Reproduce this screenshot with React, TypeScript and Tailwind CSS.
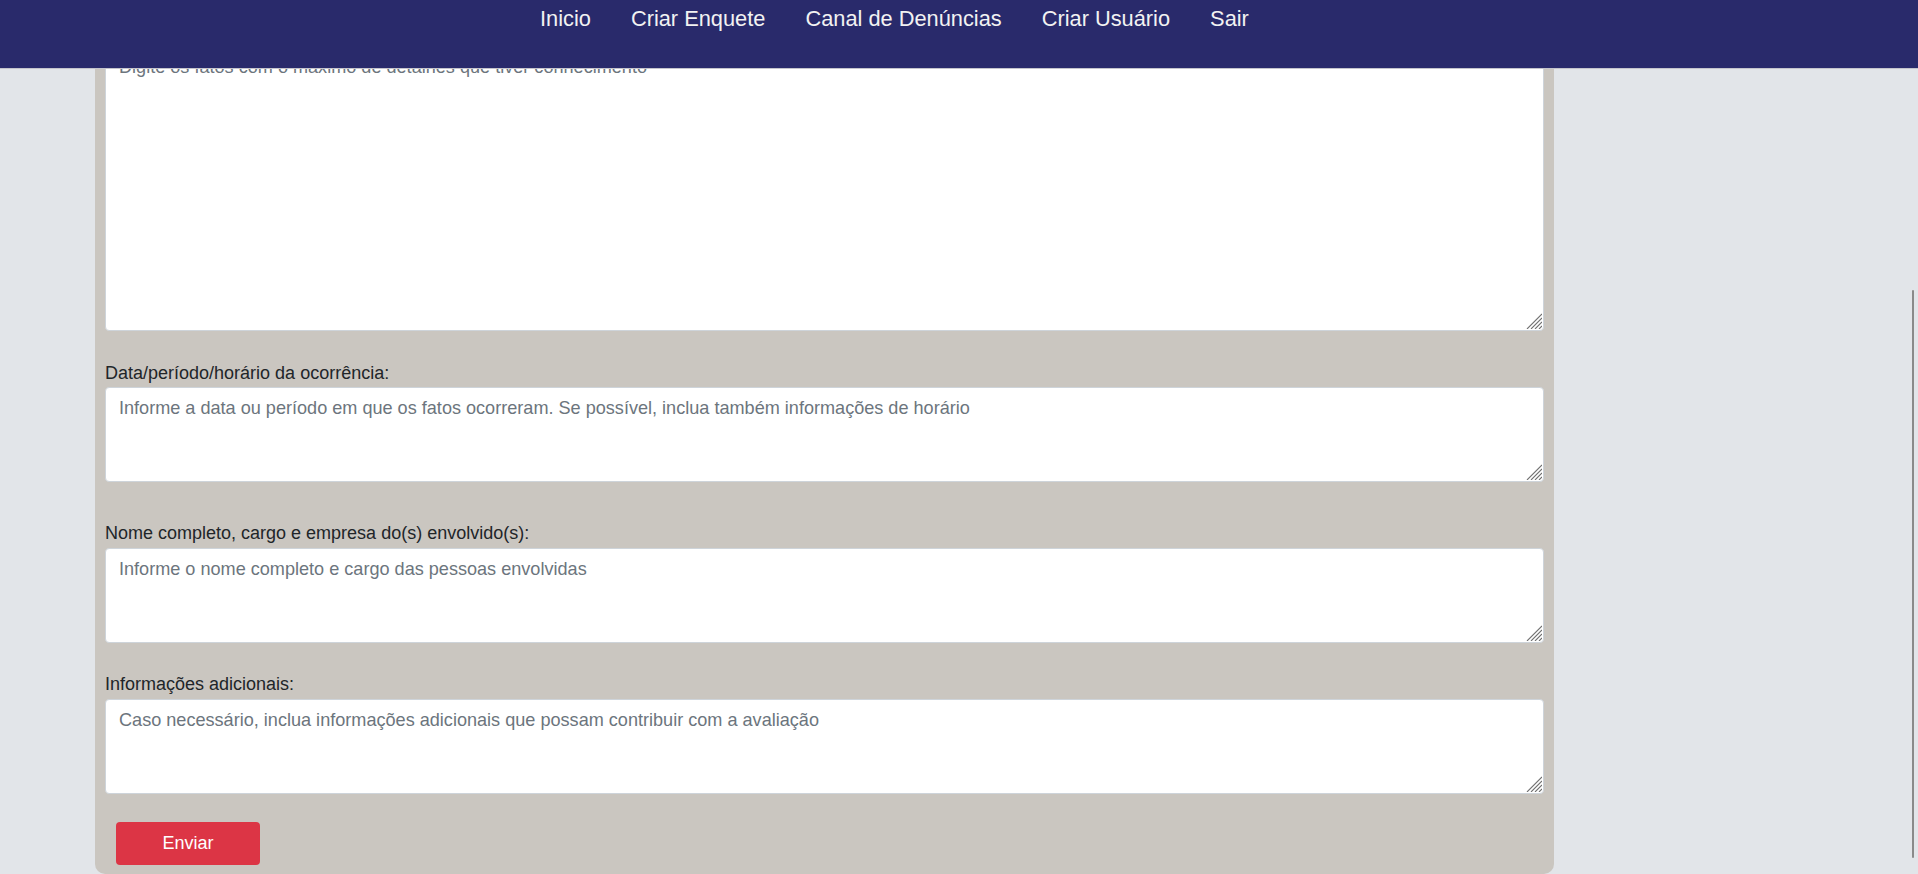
import React from 'react';

const links = ['Inicio', 'Criar Enquete', 'Canal de Denúncias', 'Criar Usuário', 'Sair'];

type FieldProps = {
  label?: string; // label shown above the textarea
  placeholder: string;
  height: string; // tailwind height class
  labelClass?: string; // spacing under the label
};

const fieldClass =
  'block w-full resize-none rounded-[4px] border border-[#ced4da] bg-white px-[13px] py-[6.6px] text-[18.1px] leading-[26.4px] text-[#212529] placeholder:text-[#6c757d] outline-none';

// resize grip in the bottom right corner of each textarea
function Grip() {
  return (
    <svg
      className="pointer-events-none absolute right-[2px] bottom-[2px]"
      width="16"
      height="16"
      viewBox="0 0 16 16"
    >
      <g stroke="#707070" strokeWidth="1.1">
        <line x1="1" y1="16" x2="16" y2="1" />
        <line x1="5" y1="16" x2="16" y2="5" />
        <line x1="9" y1="16" x2="16" y2="9" />
        <line x1="13" y1="16" x2="16" y2="13" />
      </g>
    </svg>
  );
}

function Field({ label, placeholder, height, labelClass }: FieldProps) {
  return (
    <div>
      {label && (
        <label className={`block text-[18px] leading-[26px] text-[#212529] ${labelClass ?? ''}`}>
          {label}
        </label>
      )}
      <div className="relative">
        <textarea placeholder={placeholder} className={`${fieldClass} ${height}`} />
        <Grip />
      </div>
    </div>
  );
}

export default function App() {
  return (
    <div className="min-h-screen bg-[#e2e5e9] font-['Liberation_Sans',Arial,sans-serif]">
      {/* fixed top bar, covers the top of the form */}
      <nav className="fixed top-0 left-0 right-0 z-10 h-[69px] border-b border-[#c4c4cc] bg-[#292a6b]">
        <ul className="flex pl-[520px] pt-[6px]">
          {links.map((l) => (
            <li key={l}>
              <a className="block px-5 text-[21.8px] leading-[25px] text-[#f2f2f2]" href="#">
                {l}
              </a>
            </li>
          ))}
        </ul>
      </nav>

      <div className="ml-[95px] w-[1459px] rounded-b-[10px] bg-[#cac6c0] px-[10px] pt-[46px] pb-[9px]">
        <Field
          placeholder="Digite os fatos com o máximo de detalhes que tiver conhecimento"
          height="h-[285px]"
        />
        <div className="mt-[29px]">
          <Field
            label="Data/período/horário da ocorrência:"
            labelClass="mb-[1px]"
            placeholder="Informe a data ou período em que os fatos ocorreram. Se possível, inclua também informações de horário"
            height="h-[95px]"
          />
        </div>
        <div className="mt-[38px]">
          <Field
            label="Nome completo, cargo e empresa do(s) envolvido(s):"
            labelClass="mb-[2px]"
            placeholder="Informe o nome completo e cargo das pessoas envolvidas"
            height="h-[95px]"
          />
        </div>
        <div className="mt-[28px]">
          <Field
            label="Informações adicionais:"
            labelClass="mb-[2px]"
            placeholder="Caso necessário, inclua informações adicionais que possam contribuir com a avaliação"
            height="h-[95px]"
          />
        </div>
        <button className="mt-[28px] ml-[11px] h-[43px] w-[144px] rounded-[4px] bg-[#dc3545] text-[18px] text-white">
          Enviar
        </button>
      </div>

      {/* overlay scrollbar thumb */}
      <div className="fixed right-[4px] top-[290px] h-[568px] w-[2px] rounded-full bg-[#8a8a8a]" />
    </div>
  );
}
